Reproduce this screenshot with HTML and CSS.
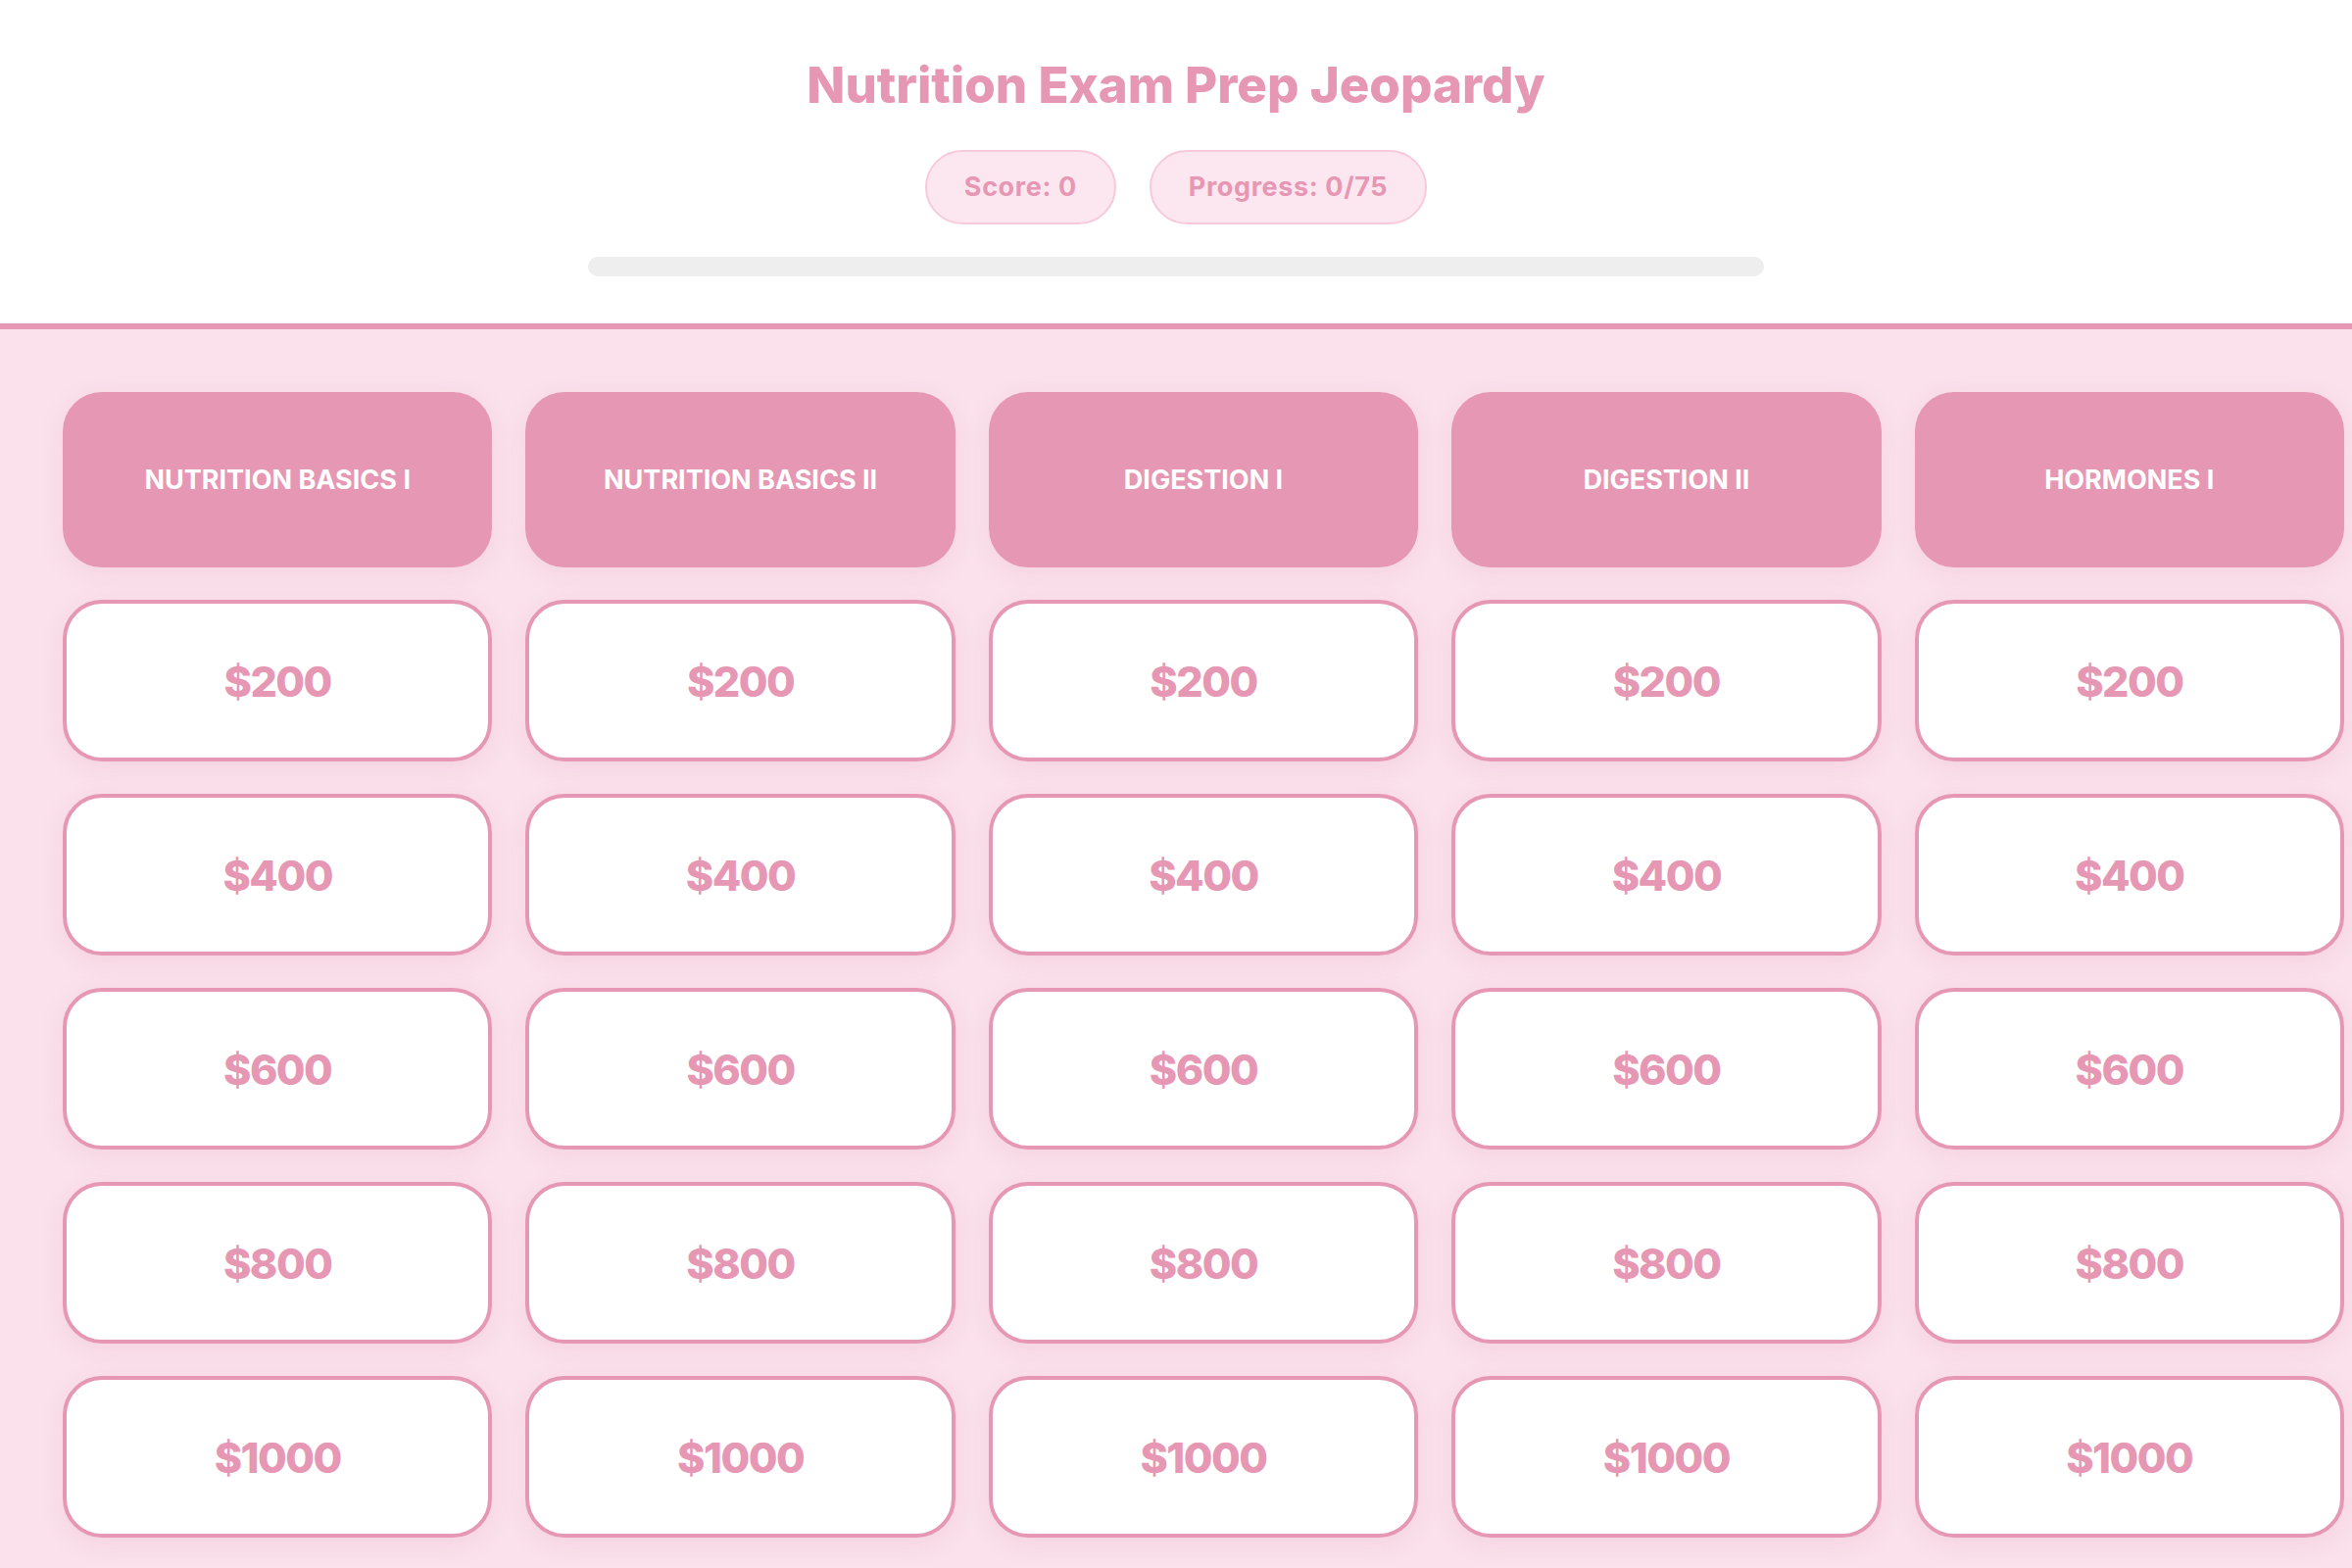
FILE: index.html
```html
<!DOCTYPE html>
<html>
<head>
    <title>Nutrition Exam Prep Jeopardy</title>
    <link rel="stylesheet" href="styles.css">
</head>
<body>
    <div class="top">
        <h1>Nutrition Exam Prep Jeopardy</h1>
        <div class="stats">
            <div class="pill" id="score">Score: 0</div>
            <div class="pill" id="progress">Progress: 0/75</div>
        </div>
        <div class="bar"><div class="bar-fill"></div></div>
    </div>

    <div class="board">
        <div class="category">NUTRITION BASICS I</div>
        <div class="category">NUTRITION BASICS II</div>
        <div class="category">DIGESTION I</div>
        <div class="category">DIGESTION II</div>
        <div class="category">HORMONES I</div>

        <div class="tile">$200</div>
        <div class="tile">$200</div>
        <div class="tile">$200</div>
        <div class="tile">$200</div>
        <div class="tile">$200</div>

        <div class="tile">$400</div>
        <div class="tile">$400</div>
        <div class="tile">$400</div>
        <div class="tile">$400</div>
        <div class="tile">$400</div>

        <div class="tile">$600</div>
        <div class="tile">$600</div>
        <div class="tile">$600</div>
        <div class="tile">$600</div>
        <div class="tile">$600</div>

        <div class="tile">$800</div>
        <div class="tile">$800</div>
        <div class="tile">$800</div>
        <div class="tile">$800</div>
        <div class="tile">$800</div>

        <div class="tile">$1000</div>
        <div class="tile">$1000</div>
        <div class="tile">$1000</div>
        <div class="tile">$1000</div>
        <div class="tile">$1000</div>
    </div>
</body>
</html>
```

FILE: styles.css
```css
body {
    margin: 0;
    background-color: #fae1eb;
    font-family: Inter, "Open Sans", sans-serif;
    color: #e697b3;
}

.top {
    background-color: #fff;
    text-align: center;
    padding: 56px 0 48px;
    border-bottom: 6px solid #e697b3;
}

h1 {
    margin: 0;
    font-size: 51px;
    line-height: 61px;
    font-weight: 800;
    letter-spacing: 0;
}

.stats {
    display: flex;
    justify-content: center;
    gap: 34px;
    margin-top: 36px;
}

.pill {
    padding: 15px 38px;
    font-size: 27px;
    line-height: 42px;
    font-weight: 700;
    letter-spacing: 0.6px;
    background-color: #fce7f0;
    border: 2px solid #f6cadb;
    border-radius: 40px;
}

.bar {
    width: 1200px;
    height: 20px;
    margin: 33px auto 0;
    background-color: #eee;
    border-radius: 10px;
    overflow: hidden;
}

.bar-fill {
    width: 0;
    height: 100%;
    background-color: #e697b3;
}

.board {
    display: grid;
    grid-template-columns: repeat(5, 1fr);
    gap: 33px 34px;
    padding: 64px 8px 40px 64px;
}

.category {
    height: 179px;
    display: flex;
    justify-content: center;
    align-items: center;
    background-color: #e697b3;
    color: #fff;
    font-size: 27px;
    font-weight: 700;
    border-radius: 40px;
    box-shadow: 0 6px 22px rgba(230, 151, 179, 0.18);
}

.tile {
    height: 157px;
    display: flex;
    justify-content: center;
    align-items: center;
    background-color: #fff;
    border: 4px solid #e697b3;
    border-radius: 40px;
    font-size: 43px;
    font-weight: 800;
    letter-spacing: -1.5px;
    cursor: pointer;
    box-shadow: 0 6px 22px rgba(230, 151, 179, 0.18);
    transition: background-color 0.3s;
}

.tile:hover {
    background-color: #fdf0f5;
}
```
